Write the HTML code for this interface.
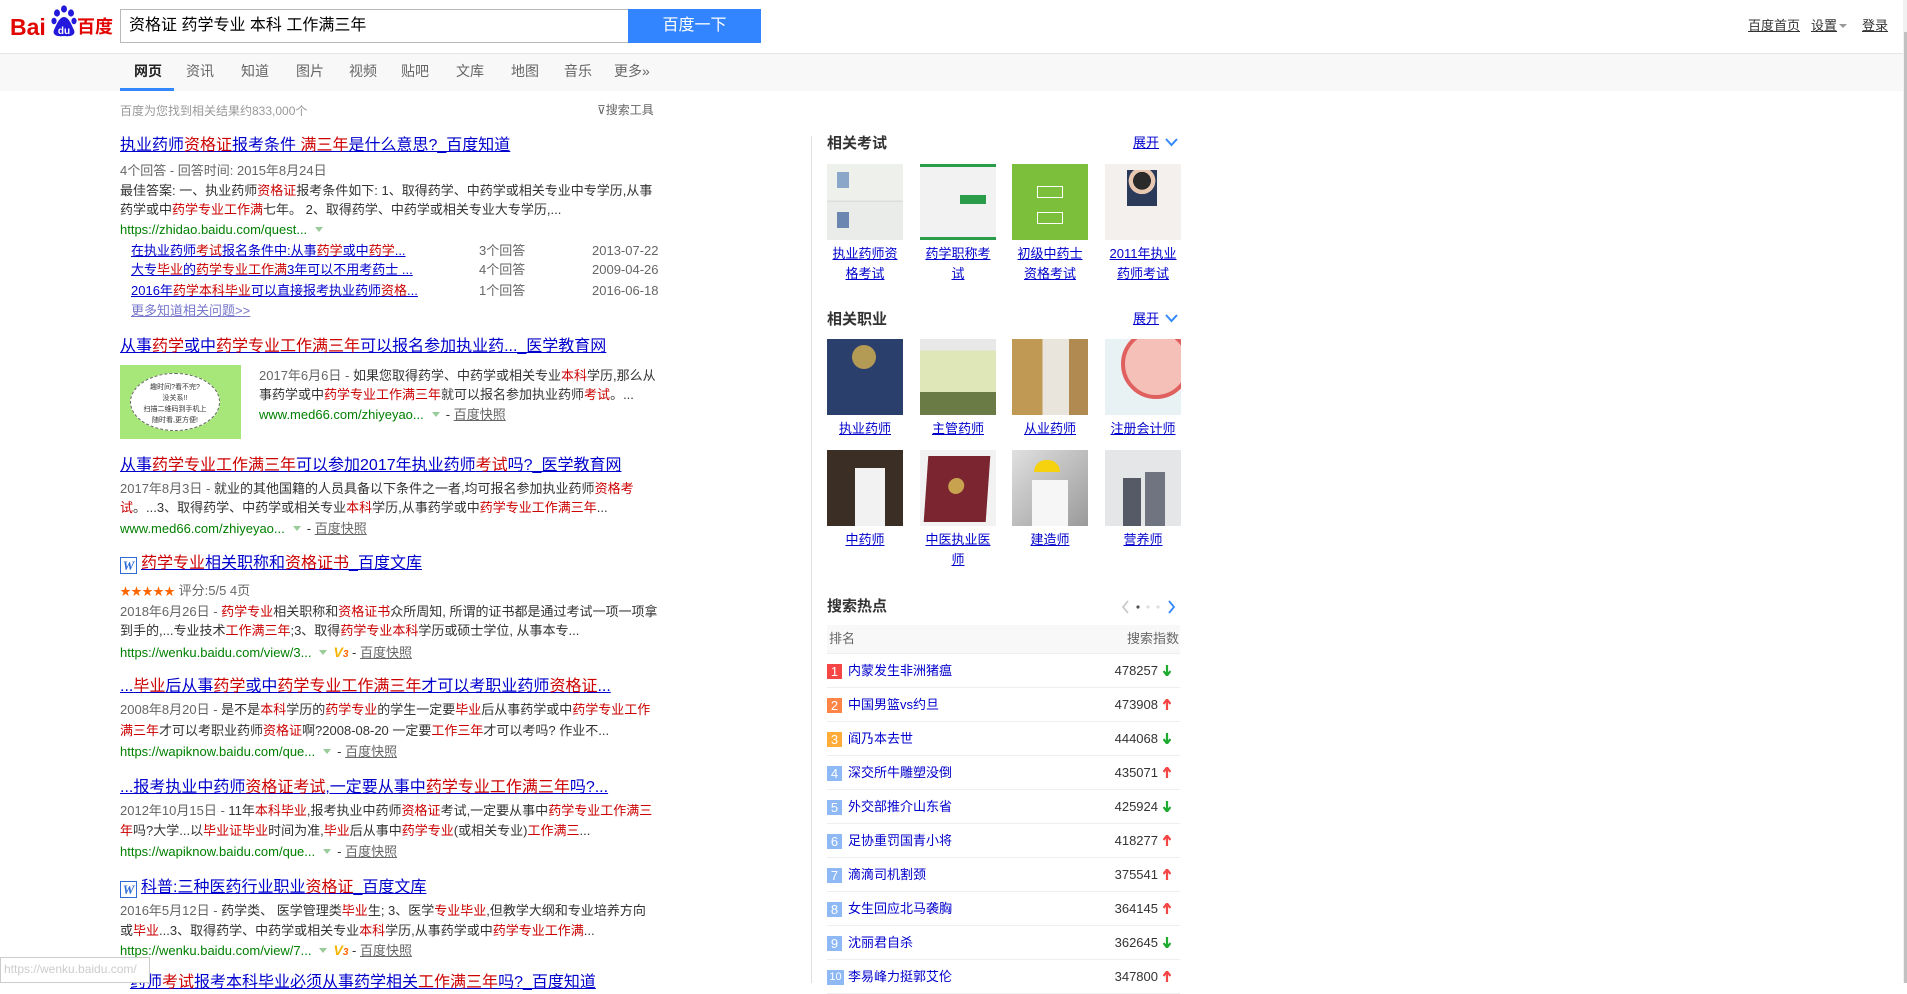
<!DOCTYPE html>
<html><head><meta charset="utf-8">
<style>
*{margin:0;padding:0;box-sizing:border-box}
html,body{width:1907px;height:983px;overflow:hidden;background:#fff;font-family:"Liberation Sans","Noto Sans CJK SC",sans-serif;color:#333}
.a{position:absolute;white-space:nowrap;font-size:13px;line-height:20px}
.t{position:absolute;white-space:nowrap;font-size:16px;line-height:22px;color:#00c;text-decoration:underline}
em{font-style:normal;color:#c00}
.g{color:#666}
.u{color:#008000}
.k{color:#666;text-decoration:underline}
.l{color:#00c;text-decoration:underline}
.tri{display:inline-block;width:0;height:0;border-left:4px solid transparent;border-right:4px solid transparent;border-top:5px solid #9c9;margin:0 6px 2px 8px;vertical-align:middle}
.v3{color:#f4b400;font-weight:bold;font-style:italic;font-size:14px}.v3 b{color:#f60;font-size:10px}
.w{position:absolute;width:17px;height:17px;border:1px solid #2d6bd6;color:#2d6bd6;font:bold italic 13px/15px "Liberation Serif",serif;text-align:center}
.img{position:absolute;width:76px;height:76px;overflow:hidden}
.lab{position:absolute;width:76px;text-align:center;font-size:13px;line-height:20px;color:#00c;text-decoration:underline}
.h{position:absolute;font-size:15px;font-weight:bold;color:#333;line-height:20px}
.row{position:absolute;left:827px;width:353px;height:34px;border-bottom:1px solid #eee}
.row .n{position:absolute;left:0;top:10px;width:15px;height:15px;color:#fff;font-size:13px;line-height:15px;text-align:center;background:#8eb9f5}
.row .x{position:absolute;left:21px;top:7px;font-size:13px;line-height:20px;color:#00c}
.row .s{position:absolute;right:22px;top:7px;font-size:13px;line-height:20px;color:#333}
.row svg{position:absolute;right:9px;top:11px}
</style></head><body>
<!-- header -->
<div style="position:absolute;left:10px;top:16px;font:bold 23px/23px 'Liberation Sans',sans-serif;color:#e10601;letter-spacing:0">Bai</div>
<svg style="position:absolute;left:51px;top:4px" width="26" height="34" viewBox="0 0 26 34">
<ellipse cx="6" cy="9" rx="3" ry="3.6" fill="#2319dc"/><ellipse cx="13" cy="5" rx="3" ry="3.6" fill="#2319dc"/><ellipse cx="20" cy="9" rx="3" ry="3.6" fill="#2319dc"/><ellipse cx="3" cy="17" rx="2.6" ry="3.2" fill="#2319dc"/><ellipse cx="23" cy="17" rx="2.6" ry="3.2" fill="#2319dc"/>
<path d="M13 13 C8 13 5 22 3 26 C1 31 6 33 13 32 C20 33 25 31 23 26 C21 22 18 13 13 13Z" fill="#2319dc"/>
<text x="13" y="30" text-anchor="middle" font-family="Liberation Sans" font-weight="bold" font-size="10" fill="#fff">du</text></svg>
<div style="position:absolute;left:77px;top:15px;font:bold 18px/22px 'Noto Sans CJK SC',sans-serif;color:#e10601">百度</div>
<div style="position:absolute;left:120px;top:9px;width:509px;height:34px;border:1px solid #b8b8b8;border-right:none"></div>
<div class="a" style="left:129px;top:15px;font-size:16px;line-height:22px;color:#000">资格证 药学专业 本科 工作满三年</div>
<svg style="position:absolute;left:631px;top:17px" width="18" height="16" viewBox="0 0 18 16"><rect x="1" y="3" width="16" height="12" rx="1.5" fill="none" stroke="#aaa"/><path d="M5 3 L7 1 H11 L13 3" fill="none" stroke="#aaa"/><circle cx="9" cy="9" r="3.3" fill="none" stroke="#aaa"/></svg>
<div style="position:absolute;left:628px;top:9px;width:133px;height:34px;background:#3385ff;color:#fff;font-size:16px;line-height:34px;text-align:center">百度一下</div>
<div class="a" style="left:1748px;top:16px;text-decoration:underline">百度首页</div>
<div class="a" style="left:1811px;top:16px;text-decoration:underline">设置</div>
<div style="position:absolute;left:1839px;top:24px;border-left:4px solid transparent;border-right:4px solid transparent;border-top:4px solid #999"></div>
<div class="a" style="left:1862px;top:16px;text-decoration:underline">登录</div>
<!-- nav -->
<div style="position:absolute;left:0;top:53px;width:1903px;height:38px;background:#f8f8f8;border-top:1px solid #e6e6e6"></div>
<div class="a" style="left:134px;top:61px;font-size:14px;color:#222;font-weight:bold">网页</div>
<div class="a" style="left:186px;top:61px;font-size:14px;color:#666">资讯</div>
<div class="a" style="left:241px;top:61px;font-size:14px;color:#666">知道</div>
<div class="a" style="left:296px;top:61px;font-size:14px;color:#666">图片</div>
<div class="a" style="left:349px;top:61px;font-size:14px;color:#666">视频</div>
<div class="a" style="left:401px;top:61px;font-size:14px;color:#666">贴吧</div>
<div class="a" style="left:456px;top:61px;font-size:14px;color:#666">文库</div>
<div class="a" style="left:511px;top:61px;font-size:14px;color:#666">地图</div>
<div class="a" style="left:564px;top:61px;font-size:14px;color:#666">音乐</div>
<div class="a" style="left:614px;top:61px;font-size:14px;color:#666">更多»</div>
<div style="position:absolute;left:120px;top:88px;width:54px;height:3px;background:#38f"></div>
<div class="a" style="left:120px;top:101px;color:#999;font-size:12px">百度为您找到相关结果约833,000个</div>
<div class="a" style="left:597px;top:100px;color:#666;font-size:12px">⊽搜索工具</div>
<!-- results -->
<div class="t" style="left:120px;top:135px">执业药师<em>资格证</em>报考条件 <em>满三年</em>是什么意思?_百度知道</div>
<div class="a g" style="left:120px;top:161px">4个回答 - 回答时间: 2015年8月24日</div>
<div class="a" style="left:120px;top:181px">最佳答案: 一、执业药师<em>资格证</em>报考条件如下: 1、取得药学、中药学或相关专业中专学历,从事</div>
<div class="a" style="left:120px;top:200px">药学或中<em>药学专业工作满</em>七年。 2、取得药学、中药学或相关专业大专学历,...</div>
<div class="a u" style="left:120px;top:220px">https://zhidao.baidu.com/quest...<span class="tri"></span></div>
<div class="a l" style="left:131px;top:241px">在执业药师<em>考试</em>报名条件中:从事<em>药学</em>或中<em>药学</em>...</div>
<div class="a l" style="left:131px;top:260px">大专<em>毕业</em>的<em>药学专业工作满</em>3年可以不用考药士 ...</div>
<div class="a l" style="left:131px;top:281px">2016年<em>药学本科毕业</em>可以直接报考执业药师<em>资格</em>...</div>
<div class="a g" style="left:479px;top:241px">3个回答</div><div class="a g" style="left:479px;top:260px">4个回答</div><div class="a g" style="left:479px;top:281px">1个回答</div>
<div class="a g" style="left:592px;top:241px">2013-07-22</div><div class="a g" style="left:592px;top:260px">2009-04-26</div><div class="a g" style="left:592px;top:281px">2016-06-18</div>
<div class="a" style="left:131px;top:301px;color:#77c;text-decoration:underline">更多知道相关问题&gt;&gt;</div>

<div class="t" style="left:120px;top:336px">从事<em>药学</em>或中<em>药学专业工作满三年</em>可以报名参加执业药..._医学教育网</div>
<div style="position:absolute;left:120px;top:365px;width:121px;height:74px;background:#a7e77a"><div style="position:absolute;left:10px;top:8px;width:90px;height:58px;border-radius:50%;background:#fff;border:1px dashed #666;font-size:7px;line-height:11px;text-align:center;padding-top:8px;color:#333">趣时间?看不完?<br>没关系!!<br>扫描二维码到手机上<br>随时看,更方便!</div></div>
<div class="a" style="left:259px;top:366px"><span class="g">2017年6月6日 - </span>如果您取得药学、中药学或相关专业<em>本科</em>学历,那么从</div>
<div class="a" style="left:259px;top:385px">事药学或中<em>药学专业工作满三年</em>就可以报名参加执业药师<em>考试</em>。...</div>
<div class="a" style="left:259px;top:405px"><span class="u">www.med66.com/zhiyeyao...</span><span class="tri"></span>- <span class="k">百度快照</span></div>

<div class="t" style="left:120px;top:455px">从事<em>药学专业工作满三年</em>可以参加2017年执业药师<em>考试</em>吗?_医学教育网</div>
<div class="a" style="left:120px;top:479px"><span class="g">2017年8月3日 - </span>就业的其他国籍的人员具备以下条件之一者,均可报名参加执业药师<em>资格考</em></div>
<div class="a" style="left:120px;top:498px"><em>试</em>。...3、取得药学、中药学或相关专业<em>本科</em>学历,从事药学或中<em>药学专业工作满三年</em>...</div>
<div class="a" style="left:120px;top:519px"><span class="u">www.med66.com/zhiyeyao...</span><span class="tri"></span>- <span class="k">百度快照</span></div>

<div class="w" style="left:120px;top:557px">W</div>
<div class="t" style="left:141px;top:553px"><em>药学专业</em>相关职称和<em>资格证书</em>_百度文库</div>
<div class="a" style="left:120px;top:581px"><span style="color:#f60;font-size:11px">★★★★★</span> <span class="g">评分:5/5 4页</span></div>
<div class="a" style="left:120px;top:602px"><span class="g">2018年6月26日 - </span><em>药学专业</em>相关职称和<em>资格证书</em>众所周知, 所谓的证书都是通过考试一项一项拿</div>
<div class="a" style="left:120px;top:621px">到手的,...专业技术<em>工作满三年</em>;3、取得<em>药学专业本科</em>学历或硕士学位, 从事本专...</div>
<div class="a" style="left:120px;top:642px"><span class="u">https://wenku.baidu.com/view/3...</span><span class="tri"></span><span class="v3">V<b>3</b></span> - <span class="k">百度快照</span></div>

<div class="t" style="left:120px;top:676px">...<em>毕业</em>后从事<em>药学</em>或中<em>药学专业工作满三年</em>才可以考职业药师<em>资格证</em>...</div>
<div class="a" style="left:120px;top:700px"><span class="g">2008年8月20日 - </span>是不是<em>本科</em>学历的<em>药学专业</em>的学生一定要<em>毕业</em>后从事药学或中<em>药学专业工作</em></div>
<div class="a" style="left:120px;top:721px"><em>满三年</em>才可以考职业药师<em>资格证</em>啊?2008-08-20 一定要<em>工作三年</em>才可以考吗? 作业不...</div>
<div class="a" style="left:120px;top:742px"><span class="u">https://wapiknow.baidu.com/que...</span><span class="tri"></span>- <span class="k">百度快照</span></div>

<div class="t" style="left:120px;top:777px">...报考执业中药师<em>资格证考试</em>,一定要从事中<em>药学专业工作满三年</em>吗?...</div>
<div class="a" style="left:120px;top:801px"><span class="g">2012年10月15日 - </span>11年<em>本科毕业</em>,报考执业中药师<em>资格证</em>考试,一定要从事中<em>药学专业工作满三</em></div>
<div class="a" style="left:120px;top:821px"><em>年</em>吗?大学...以<em>毕业证毕业</em>时间为准,<em>毕业</em>后从事中<em>药学专业</em>(或相关专业)<em>工作满三</em>...</div>
<div class="a" style="left:120px;top:842px"><span class="u">https://wapiknow.baidu.com/que...</span><span class="tri"></span>- <span class="k">百度快照</span></div>

<div class="w" style="left:120px;top:881px">W</div>
<div class="t" style="left:141px;top:877px">科普:三种医药行业职业<em>资格证</em>_百度文库</div>
<div class="a" style="left:120px;top:901px"><span class="g">2016年5月12日 - </span>药学类、 医学管理类<em>毕业</em>生; 3、医学<em>专业毕业</em>,但教学大纲和专业培养方向</div>
<div class="a" style="left:120px;top:921px">或<em>毕业</em>...3、取得药学、中药学或相关专业<em>本科</em>学历,从事药学或中<em>药学专业工作满</em>...</div>
<div class="a" style="left:120px;top:940px"><span class="u">https://wenku.baidu.com/view/7...</span><span class="tri"></span><span class="v3">V<b>3</b></span> - <span class="k">百度快照</span></div>
<div class="t" style="left:130px;top:972px">药师<em>考试</em>报考本科毕业必须从事药学相关<em>工作满三年</em>吗?_百度知道</div>
<div style="position:absolute;left:0;top:957px;width:150px;height:26px;background:#fff;border:1px solid #ccc;color:#ccc;font-size:12px;line-height:22px;padding-left:3px">https://wenku.baidu.com/</div>

<!-- right column -->
<div style="position:absolute;left:811px;top:136px;width:1px;height:847px;background:#e1e1e1"></div>
<div class="h" style="left:827px;top:134px">相关考试</div>
<div class="a l" style="left:1133px;top:133px">展开</div>
<svg style="position:absolute;left:1165px;top:138px" width="13" height="9"><path d="M1 1 L6.5 7 L12 1" fill="none" stroke="#38f" stroke-width="2"/></svg>
<div class="img" style="left:827px;top:164px;background:linear-gradient(#eef0ec 0 48%,#ddd 48% 50%,#e9ece9 50%)"><div style="position:absolute;left:10px;top:8px;width:12px;height:16px;background:#8aa6c8"></div><div style="position:absolute;left:10px;top:48px;width:12px;height:16px;background:#6b86b0"></div></div>
<div class="img" style="left:920px;top:164px;background:#f2f2f2;border-top:3px solid #2a9d4a;border-bottom:3px solid #2a9d4a"><div style="position:absolute;left:40px;top:28px;width:26px;height:9px;background:#2a9d4a"></div></div>
<div class="img" style="left:1012px;top:164px;background:#7cbf3a"><div style="position:absolute;left:25px;top:22px;width:26px;height:12px;border:1px solid #fff"></div><div style="position:absolute;left:25px;top:48px;width:26px;height:12px;border:1px solid #fff"></div></div>
<div class="img" style="left:1105px;top:164px;background:#f3f0ee"><div style="position:absolute;left:22px;top:6px;width:30px;height:36px;background:radial-gradient(circle at 50% 30%,#2a2a2a 0 30%,#e8c8b0 31% 45%,#2c3a5a 46%)"></div></div>
<div class="lab" style="left:827px;top:244px">执业药师资<br>格考试</div>
<div class="lab" style="left:920px;top:244px">药学职称考<br>试</div>
<div class="lab" style="left:1012px;top:244px">初级中药士<br>资格考试</div>
<div class="lab" style="left:1105px;top:244px">2011年执业<br>药师考试</div>

<div class="h" style="left:827px;top:310px">相关职业</div>
<div class="a l" style="left:1133px;top:309px">展开</div>
<svg style="position:absolute;left:1165px;top:314px" width="13" height="9"><path d="M1 1 L6.5 7 L12 1" fill="none" stroke="#38f" stroke-width="2"/></svg>
<div class="img" style="left:827px;top:339px;background:#2a3f6c"><div style="position:absolute;left:25px;top:6px;width:24px;height:24px;border-radius:50%;background:#b39a55"></div></div>
<div class="img" style="left:920px;top:339px;background:linear-gradient(#e8e8e8 0 15%,#dfe6b8 15% 70%,#6a7b45 70%)"></div>
<div class="img" style="left:1012px;top:339px;background:linear-gradient(90deg,#c09a55 0 40%,#e9e4dc 40% 75%,#b08a50 75%)"></div>
<div class="img" style="left:1105px;top:339px;background:#e8f1f3"><div style="position:absolute;left:16px;top:-10px;width:70px;height:70px;border-radius:50%;border:4px solid #e06060;background:#f4c0b8"></div></div>
<div class="lab" style="left:827px;top:419px">执业药师</div>
<div class="lab" style="left:920px;top:419px">主管药师</div>
<div class="lab" style="left:1012px;top:419px">从业药师</div>
<div class="lab" style="left:1105px;top:419px">注册会计师</div>
<div class="img" style="left:827px;top:450px;background:#3a2e25"><div style="position:absolute;left:28px;top:18px;width:30px;height:58px;background:#f2f2f2"></div></div>
<div class="img" style="left:920px;top:450px;background:#f2f2f2"><div style="position:absolute;left:6px;top:6px;width:62px;height:66px;background:#7a2530;transform:skewX(-4deg)"><div style="position:absolute;left:22px;top:22px;width:16px;height:16px;border-radius:50%;background:#c9a24f"></div></div></div>
<div class="img" style="left:1012px;top:450px;background:linear-gradient(135deg,#e0e0e0,#9a9a9a)"><div style="position:absolute;left:22px;top:10px;width:26px;height:12px;border-radius:13px 13px 0 0;background:#f5d10e"></div><div style="position:absolute;left:20px;top:30px;width:36px;height:46px;background:#f6f6f6"></div></div>
<div class="img" style="left:1105px;top:450px;background:#e4e6e8"><div style="position:absolute;left:18px;top:28px;width:18px;height:48px;background:#555a66"></div><div style="position:absolute;left:40px;top:22px;width:20px;height:54px;background:#707480"></div></div>
<div class="lab" style="left:827px;top:530px">中药师</div>
<div class="lab" style="left:920px;top:530px">中医执业医<br>师</div>
<div class="lab" style="left:1012px;top:530px">建造师</div>
<div class="lab" style="left:1105px;top:530px">营养师</div>

<div class="h" style="left:827px;top:597px">搜索热点</div>
<svg style="position:absolute;left:1120px;top:599px" width="60" height="16"><path d="M8 2 L3 8 L8 14" fill="none" stroke="#ccc" stroke-width="1.8"/><circle cx="18" cy="8" r="1.6" fill="#555"/><circle cx="28" cy="8" r="1.6" fill="#ddd"/><circle cx="38" cy="8" r="1.6" fill="#ddd"/><path d="M49 2 L54 8 L49 14" fill="none" stroke="#38f" stroke-width="1.8"/></svg>
<div style="position:absolute;left:827px;top:625px;width:353px;height:29px;background:#f8f8f8;border-bottom:1px solid #eee"></div>
<div class="a g" style="left:829px;top:629px">排名</div>
<div class="a g" style="left:1127px;top:629px">搜索指数</div>
<div class="row" style="top:654px"><div class="n" style="background:#f54545">1</div><div class="x">内蒙发生非洲猪瘟</div><div class="s">478257</div><svg width="8" height="11"><path d="M4 0V9M0.5 6L4 10.5 7.5 6" stroke="#1eaa2e" stroke-width="2.2" fill="none"/></svg></div>
<div class="row" style="top:688px"><div class="n" style="background:#ff8547">2</div><div class="x">中国男篮vs约旦</div><div class="s">473908</div><svg width="8" height="11"><path d="M4 11V2M0.5 5L4 0.5 7.5 5" stroke="#f54545" stroke-width="2.2" fill="none"/></svg></div>
<div class="row" style="top:722px"><div class="n" style="background:#ffac38">3</div><div class="x">阎乃本去世</div><div class="s">444068</div><svg width="8" height="11"><path d="M4 0V9M0.5 6L4 10.5 7.5 6" stroke="#1eaa2e" stroke-width="2.2" fill="none"/></svg></div>
<div class="row" style="top:756px"><div class="n">4</div><div class="x">深交所牛雕塑没倒</div><div class="s">435071</div><svg width="8" height="11"><path d="M4 11V2M0.5 5L4 0.5 7.5 5" stroke="#f54545" stroke-width="2.2" fill="none"/></svg></div>
<div class="row" style="top:790px"><div class="n">5</div><div class="x">外交部推介山东省</div><div class="s">425924</div><svg width="8" height="11"><path d="M4 0V9M0.5 6L4 10.5 7.5 6" stroke="#1eaa2e" stroke-width="2.2" fill="none"/></svg></div>
<div class="row" style="top:824px"><div class="n">6</div><div class="x">足协重罚国青小将</div><div class="s">418277</div><svg width="8" height="11"><path d="M4 11V2M0.5 5L4 0.5 7.5 5" stroke="#f54545" stroke-width="2.2" fill="none"/></svg></div>
<div class="row" style="top:858px"><div class="n">7</div><div class="x">滴滴司机割颈</div><div class="s">375541</div><svg width="8" height="11"><path d="M4 11V2M0.5 5L4 0.5 7.5 5" stroke="#f54545" stroke-width="2.2" fill="none"/></svg></div>
<div class="row" style="top:892px"><div class="n">8</div><div class="x">女生回应北马袭胸</div><div class="s">364145</div><svg width="8" height="11"><path d="M4 11V2M0.5 5L4 0.5 7.5 5" stroke="#f54545" stroke-width="2.2" fill="none"/></svg></div>
<div class="row" style="top:926px"><div class="n">9</div><div class="x">沈丽君自杀</div><div class="s">362645</div><svg width="8" height="11"><path d="M4 0V9M0.5 6L4 10.5 7.5 6" stroke="#1eaa2e" stroke-width="2.2" fill="none"/></svg></div>
<div class="row" style="top:960px"><div class="n" style="font-size:11px;width:17px">10</div><div class="x">李易峰力挺郭艾伦</div><div class="s">347800</div><svg width="8" height="11"><path d="M4 11V2M0.5 5L4 0.5 7.5 5" stroke="#f54545" stroke-width="2.2" fill="none"/></svg></div>

<!-- scrollbar -->
<div style="position:absolute;left:1903px;top:0;width:4px;height:983px;background:#f1f1f1"></div>
<div style="position:absolute;left:1904px;top:32px;width:3px;height:951px;background:#c1c1c1"></div>
</body></html>
